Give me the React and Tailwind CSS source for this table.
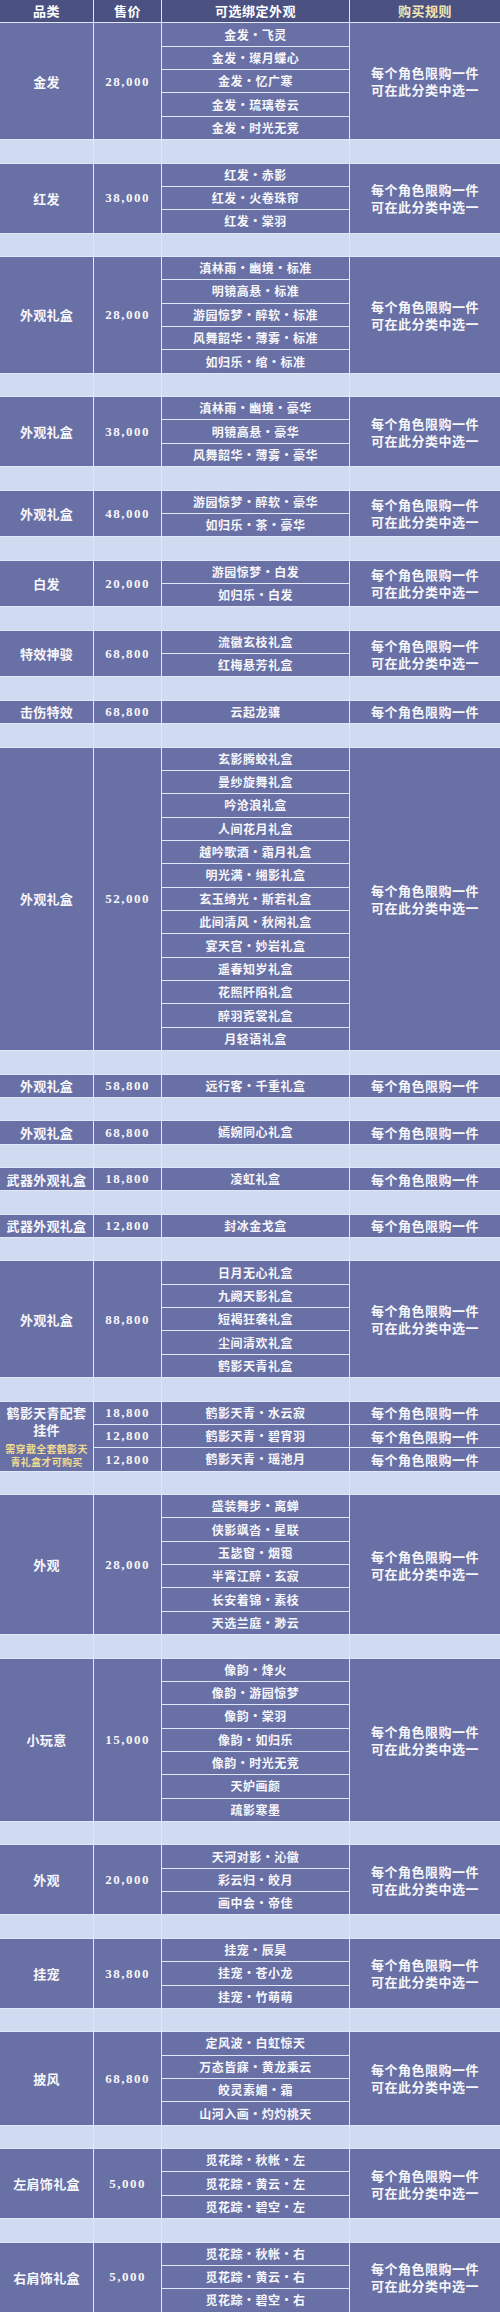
const SPAN = {
  1: 'row-span-1',
  2: 'row-span-2',
  3: 'row-span-3',
  4: 'row-span-4',
  5: 'row-span-5',
  6: 'row-span-6',
  7: 'row-span-7',
  13: 'row-span-13',
}

const RULE = ['每个角色限购一件', '可在此分类中选一']

const blocks = [
  { cat: '金发', price: '28,000', items: ['金发・飞灵', '金发・璨月蝶心', '金发・忆广寒', '金发・琉璃卷云', '金发・时光无竞'] },
  { cat: '红发', price: '38,000', items: ['红发・赤影', '红发・火卷珠帘', '红发・棠羽'] },
  { cat: '外观礼盒', price: '28,000', items: ['滇林雨・幽境・标准', '明镜高悬・标准', '游园惊梦・醉软・标准', '风舞韶华・薄雾・标准', '如归乐・绾・标准'] },
  { cat: '外观礼盒', price: '38,000', items: ['滇林雨・幽境・豪华', '明镜高悬・豪华', '风舞韶华・薄雾・豪华'] },
  { cat: '外观礼盒', price: '48,000', items: ['游园惊梦・醉软・豪华', '如归乐・茶・豪华'] },
  { cat: '白发', price: '20,000', items: ['游园惊梦・白发', '如归乐・白发'] },
  { cat: '特效神骏', price: '68,800', items: ['流徽玄枝礼盒', '红梅悬芳礼盒'] },
  { cat: '击伤特效', price: '68,800', items: ['云起龙骧'], single: true },
  {
    cat: '外观礼盒', price: '52,000',
    items: ['玄影腾蛟礼盒', '曼纱旋舞礼盒', '吟沧浪礼盒', '人间花月礼盒', '越吟歌酒・霜月礼盒', '明光满・缃影礼盒', '玄玉绮光・斯若礼盒', '此间清风・秋闲礼盒', '宴天宫・妙岩礼盒', '遥春知岁礼盒', '花照阡陌礼盒', '醉羽霓裳礼盒', '月轻语礼盒'],
  },
  { cat: '外观礼盒', price: '58,800', items: ['远行客・千重礼盒'], single: true },
  { cat: '外观礼盒', price: '68,800', items: ['嫣婉同心礼盒'], single: true },
  { cat: '武器外观礼盒', price: '18,800', items: ['凌虹礼盒'], single: true },
  { cat: '武器外观礼盒', price: '12,800', items: ['封冰金戈盒'], single: true },
  { cat: '外观礼盒', price: '88,800', items: ['日月无心礼盒', '九阙天影礼盒', '短褐狂袭礼盒', '尘间清欢礼盒', '鹤影天青礼盒'] },
  { special: true },
  { cat: '外观', price: '28,000', items: ['盛装舞步・离蝉', '侠影飒沓・星联', '玉毖窗・烟霭', '半霄江醉・玄寂', '长安着锦・素枝', '天选兰庭・渺云'] },
  { cat: '小玩意', price: '15,000', items: ['像韵・烽火', '像韵・游园惊梦', '像韵・棠羽', '像韵・如归乐', '像韵・时光无竞', '天妒画颜', '疏影寒墨'] },
  { cat: '外观', price: '20,000', items: ['天河对影・沁徽', '彩云归・皎月', '画中会・帝佳'] },
  { cat: '挂宠', price: '38,800', items: ['挂宠・辰昊', '挂宠・苍小龙', '挂宠・竹萌萌'] },
  { cat: '披风', price: '68,800', items: ['定风波・白虹惊天', '万态皆寐・黄龙乘云', '皎灵素媚・霜', '山河入画・灼灼桃天'] },
  { cat: '左肩饰礼盒', price: '5,000', items: ['觅花踪・秋帐・左', '觅花踪・黄云・左', '觅花踪・碧空・左'] },
  { cat: '右肩饰礼盒', price: '5,000', items: ['觅花踪・秋帐・右', '觅花踪・黄云・右', '觅花踪・碧空・右'] },
]

const pendant = [
  { price: '18,800', item: '鹤影天青・水云寂' },
  { price: '12,800', item: '鹤影天青・碧宵羽' },
  { price: '12,800', item: '鹤影天青・瑶池月' },
]

const body = 'flex items-center justify-center bg-[#6870a6] text-[#f6f6fb] text-center'
const catCls = `${body} text-[13px] font-bold tracking-[0.3px] leading-[17px]`
const priceCls = `${body} font-['Liberation_Serif',serif] text-[13px] font-bold tracking-[1.5px]`
const itemCls = `${body} text-[12px] font-semibold tracking-[0.5px] whitespace-nowrap overflow-hidden`
const ruleCls = `${body} flex-col text-[13px] font-bold tracking-[0.5px] leading-[17px]`

function Rule({ single }) {
  return single ? <span>{RULE[0]}</span> : (<><span>{RULE[0]}</span><span>{RULE[1]}</span></>)
}

function GapRow() {
  return (
    <>
      <div className="bg-[#d0dbf2]" />
      <div className="bg-[#d0dbf2]" />
      <div className="bg-[#d0dbf2]" />
      <div className="bg-[#d0dbf2]" />
    </>
  )
}

function Block({ block }) {
  if (block.special) {
    return (
      <>
        <div className={`${catCls} row-span-3 flex-col`}>
          <span>鹤影天青配套</span>
          <span>挂件</span>
          <span className="mt-[4px] text-[10px] leading-[13px] tracking-[0.3px] text-[#f1dc8e]">需穿戴全套鹤影天</span>
          <span className="text-[10px] leading-[13px] tracking-[0.3px] text-[#f1dc8e]">青礼盒才可购买</span>
        </div>
        {pendant.map((p, i) => (
          <div key={i} className="contents">
            <div className={priceCls}>{p.price}</div>
            <div className={itemCls}>{p.item}</div>
            <div className={ruleCls}><Rule single /></div>
          </div>
        ))}
      </>
    )
  }
  const span = SPAN[block.items.length]
  return (
    <>
      <div className={`${catCls} ${span}`}>{block.cat}</div>
      <div className={`${priceCls} ${span}`}>{block.price}</div>
      <div className={itemCls}>{block.items[0]}</div>
      <div className={`${ruleCls} ${span}`}><Rule single={block.single} /></div>
      {block.items.slice(1).map(item => (
        <div key={item} className={itemCls}>{item}</div>
      ))}
    </>
  )
}

export default function App() {
  return (
    <div className="w-[500px] bg-[#dfe6f6] font-['Noto_Sans_CJK_SC',sans-serif]">
      <div className="grid grid-cols-[93px_67px_187px_150px] auto-rows-[22.36px] gap-px">
        <div className="flex items-center justify-center bg-[#4b5282] text-[13px] font-bold tracking-[0.5px] text-white">品类</div>
        <div className="flex items-center justify-center bg-[#4b5282] text-[13px] font-bold tracking-[0.5px] text-white">售价</div>
        <div className="flex items-center justify-center bg-[#4b5282] text-[13px] font-bold tracking-[0.5px] text-white">可选绑定外观</div>
        <div className="flex items-center justify-center bg-[#4b5282] text-[13px] font-bold tracking-[0.5px] text-[#f2e6b4]">购买规则</div>
        {blocks.map((b, i) => (
          <div key={i} className="contents">
            {i > 0 && <GapRow />}
            <Block block={b} />
          </div>
        ))}
      </div>
    </div>
  )
}
